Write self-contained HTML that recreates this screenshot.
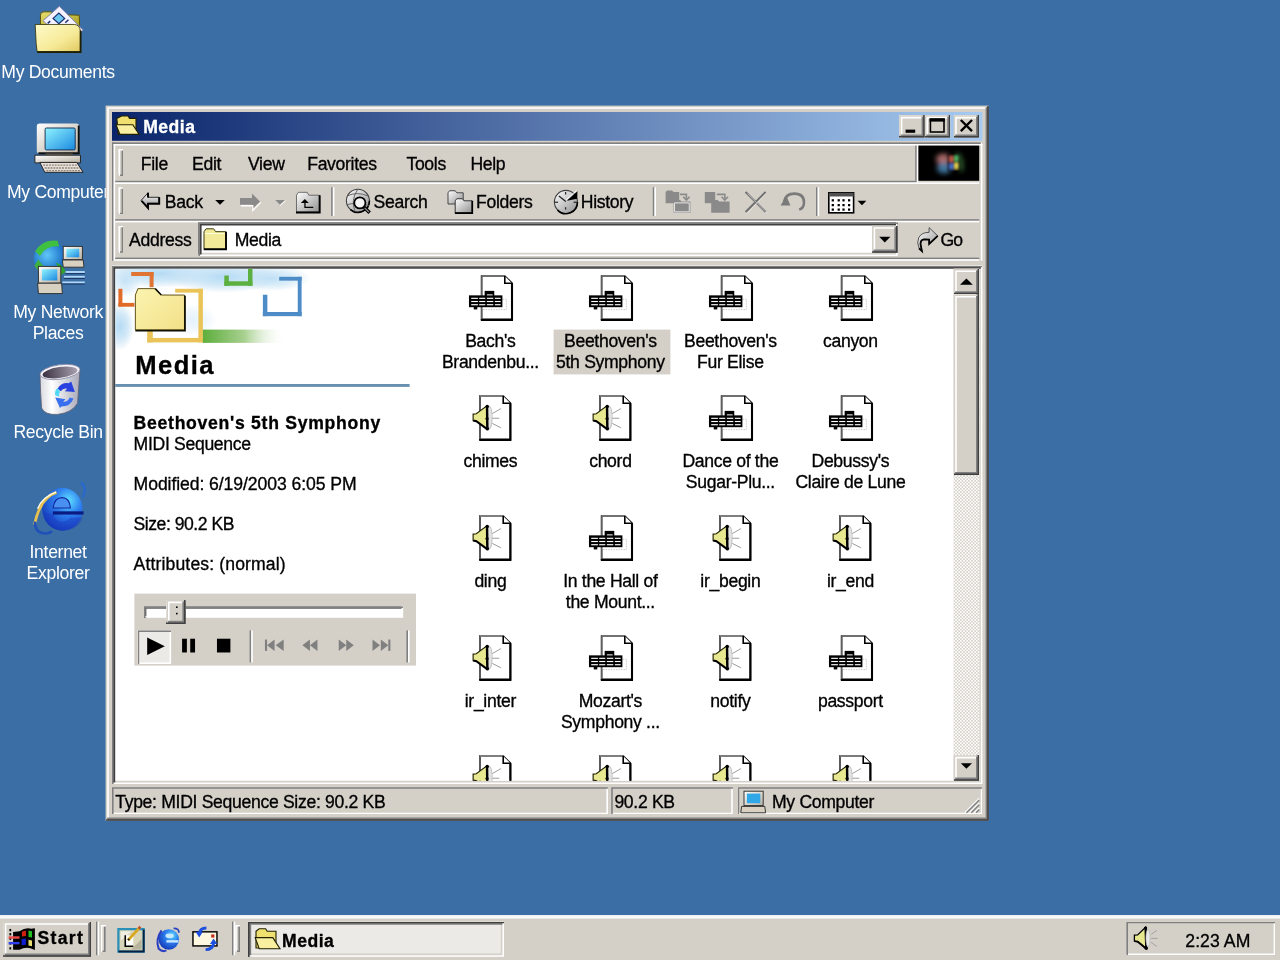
<!DOCTYPE html><html><head><meta charset="utf-8"><style>
html,body{margin:0;padding:0;width:1280px;height:960px;overflow:hidden;background:#3A6EA5;}
#root{position:absolute;left:0;top:0;width:800px;height:600px;transform:scale(1.6);will-change:transform;transform-origin:0 0;background:#3A6EA5;overflow:hidden;font-family:"Liberation Sans",sans-serif;font-size:11px;color:#000;}
.a{position:absolute;}
.t{position:absolute;white-space:nowrap;font-size:11px;line-height:13px;letter-spacing:-0.2px;-webkit-text-stroke:0.2px currentColor;}
.b{font-weight:bold;letter-spacing:0.3px;}
.face{background:#D4D0C8;}
.raised{background:#D4D0C8;box-shadow:inset -1px -1px #404040,inset 1px 1px #D4D0C8,inset -2px -2px #808080,inset 2px 2px #FFFFFF;}
.sunk{box-shadow:inset 1px 1px #808080,inset -1px -1px #FFFFFF,inset 2px 2px #404040,inset -2px -2px #D4D0C8;}
.panel{box-shadow:inset 1px 1px #808080,inset -1px -1px #FFFFFF;}
.grip{width:3px;background:#D4D0C8;box-shadow:inset 1px 1px #FFFFFF,inset -1px -1px #808080;}
.dlabel{position:absolute;width:75px;text-align:center;color:#fff;font-size:11px;line-height:13px;letter-spacing:-0.2px;}
.ilabel{position:absolute;width:75px;text-align:center;font-size:11px;line-height:13px;letter-spacing:-0.2px;-webkit-text-stroke:0.2px currentColor;}
svg{position:absolute;overflow:visible;}
</style></head><body><div id="root">

<svg style="left:0;top:0" width="800" height="600" viewBox="0 0 800 600"><defs>
<linearGradient id="dfold" x1="0" y1="0" x2="1" y2="1"><stop offset="0" stop-color="#FFFAC8"/><stop offset="0.6" stop-color="#F6EA98"/><stop offset="1" stop-color="#E0C860"/></linearGradient>
<linearGradient id="dfoldb" x1="0" y1="0" x2="1" y2="1"><stop offset="0" stop-color="#E8E070"/><stop offset="1" stop-color="#A8A020"/></linearGradient>
<linearGradient id="scr" x1="0" y1="0" x2="1" y2="1"><stop offset="0" stop-color="#90F4FF"/><stop offset="1" stop-color="#1A88E0"/></linearGradient>
<linearGradient id="beige" x1="0" y1="0" x2="1" y2="1"><stop offset="0" stop-color="#FFFFFF"/><stop offset="1" stop-color="#B8B0A0"/></linearGradient>
<linearGradient id="bin" x1="0" y1="0" x2="1" y2="0"><stop offset="0" stop-color="#D8D8E0"/><stop offset="0.3" stop-color="#FFFFFF"/><stop offset="1" stop-color="#A8A8B8"/></linearGradient>
<linearGradient id="bininside" x1="0" y1="0" x2="1" y2="0"><stop offset="0" stop-color="#3A3040"/><stop offset="1" stop-color="#A8A0B0"/></linearGradient>
<radialGradient id="globe" cx="0.4" cy="0.4" r="0.6"><stop offset="0" stop-color="#60C8F8"/><stop offset="1" stop-color="#1060C0"/></radialGradient>
<radialGradient id="iee" cx="0.65" cy="0.3" r="0.8"><stop offset="0" stop-color="#60E0FF"/><stop offset="0.4" stop-color="#2E80F0"/><stop offset="1" stop-color="#1030B0"/></radialGradient>
</defs>
<!-- My Documents -->
<path d="M25.3,15.5 L25.3,9.5 Q25.3,7.4 27.5,7.4 L32,7.4 L33.5,9 L49.5,9.5 L49.8,16 Z" fill="url(#dfoldb)" stroke="#5A5008" stroke-width="0.6"/>
<path d="M27,12.9 L37.1,3.9 L52,18.75 L42,28 Z" fill="#F4F2FF" stroke="#8080B0" stroke-width="0.6"/>
<path d="M33.2,11.5 L36.8,8.2 L40.4,11.5 L36.8,14.8 Z" fill="#68C8F0" stroke="#203070" stroke-width="0.8"/>
<path d="M29.8,14.6 L31.4,13.2 M40.8,14.2 L42.8,12.3" stroke="#203070" stroke-width="0.9"/>
<path d="M22,15.3 L46.5,15.3 Q50,15.5 50.2,19.5 L50.2,32.2 L23.2,32.2 L22.6,27 Z" fill="url(#dfold)" stroke="#303000" stroke-width="0.5"/>
<path d="M50.4,19 L50.4,32.6 L23.2,32.6" fill="none" stroke="#202000" stroke-width="1.1"/>
<!-- My Computer -->
<rect x="23" y="77.2" width="26.5" height="18.8" rx="1.8" fill="url(#beige)"/>
<path d="M49.2,78.5 L49.2,95.8 L24,95.8" fill="none" stroke="#101010" stroke-width="1.2"/>
<rect x="28.2" y="80" width="18.8" height="13.7" rx="0.8" fill="url(#scr)" stroke="#183050" stroke-width="0.6"/>
<path d="M28.4,96 L45.6,96 L45,99.1 L29,99.1 Z" fill="#6A6458"/>
<path d="M21.8,97 L50.3,97 L50.3,101.8 L21.8,101.8 Z" fill="url(#beige)" stroke="#202020" stroke-width="0.6"/>
<path d="M24.9,101.5 L48,101.5 L51.9,107.7 L28,107.7 Z" fill="#E8E0D8" stroke="#202020" stroke-width="0.6"/>
<path d="M27,103.2 L48.5,103.2 M28,105 L49.8,105 M29,106.6 L50.8,106.6" stroke="#8A8278" stroke-width="0.8" stroke-dasharray="1.2 0.6"/>
<!-- Network -->
<circle cx="31.5" cy="161.5" r="10.3" fill="url(#globe)"/>
<path d="M22,157 Q27,149 36,150.5 L37,154 Q29,153 25,160 Z" fill="#40C040"/>
<path d="M21.5,166 Q24,170 28,172 L30,168 Q26,166 24,162 Z" fill="#40B040"/>
<path d="M35,164 Q40,166 41,170 L38,172 Z" fill="#30A030"/>
<rect x="39.5" y="154" width="12" height="8.3" fill="url(#beige)" stroke="#303030" stroke-width="0.6"/>
<rect x="41.5" y="155.5" width="8" height="5.3" fill="url(#scr)"/>
<path d="M39,162.5 L52,162.5 L52.5,167 L39.5,167 Z" fill="#D8D0C0" stroke="#303030" stroke-width="0.6"/>
<g stroke="#B0D8F8" stroke-width="1.2"><path d="M41,170 L53,170"/><path d="M40,173 L53,173"/><path d="M39,176.5 L53,176.5"/></g>
<g stroke="#183060" stroke-width="0.6"><path d="M41,171 L53,171"/><path d="M40,174 L53,174"/><path d="M39,177.5 L53,177.5"/></g>
<rect x="24" y="166.5" width="14" height="10.5" fill="url(#beige)" stroke="#303030" stroke-width="0.6"/>
<rect x="26.2" y="168.3" width="9.6" height="7" fill="url(#scr)"/>
<path d="M23.5,177 L38.5,177 L39,183.5 L24,183.5 Z" fill="#D8D0C0" stroke="#303030" stroke-width="0.6"/>
<!-- Recycle bin -->
<path d="M25,234 Q25.3,246 26,255 Q28,259.5 36,259 Q45,258 48.5,252 L50,231 Z" fill="url(#bin)" stroke="#606070" stroke-width="0.5"/>
<ellipse cx="37.5" cy="232.5" rx="12.6" ry="4.5" transform="rotate(-8 37.5 232.5)" fill="#F4F4FA" stroke="#8888A0" stroke-width="0.5"/>
<ellipse cx="37.5" cy="232.8" rx="11" ry="3.4" transform="rotate(-8 37.5 232.8)" fill="url(#bininside)"/>
<path d="M36,243 Q38,239 43,239.5 L44.5,238.5 L46.8,245 L40.5,244.5 L42,243 Q39.5,242.3 38,244.5 Z" fill="#2A40E0"/>
<path d="M46,249 Q44,254 38.5,254 L37.5,255 L34.5,248.5 L41,249.5 L39.5,251 Q42.5,251.5 43.5,248.5 Z" fill="#3A70F0"/>
<path d="M34.5,247 Q34,244 36,242.5 L37.5,245 Q36.5,246 37,248 Z" fill="#50D8F8"/>
<!-- IE -->
<ellipse cx="39" cy="318.3" rx="12.6" ry="13.4" fill="url(#iee)"/>
<path d="M33.2,317.5 Q34,311 38.8,311 Q43.5,311 44,317.5 Z" fill="#4A90F0" stroke="#1028A0" stroke-width="0.7"/>
<path d="M33.5,321.5 Q34.5,326 39,326 Q42,326 44,323.5 L51.5,323.5 Q49,331.5 39.5,331.5 Q29,331 27.5,320 Z" fill="#1A3AC0" opacity="0.45"/>
<rect x="33" y="319.6" width="19.2" height="2" fill="#0A1A80"/>
<path d="M50.5,301.5 Q55,305 51.5,311" fill="none" stroke="#2868D0" stroke-width="1.3"/>
<path d="M35.3,307.8 Q25,311 21.6,327.9" fill="none" stroke="#E8C050" stroke-width="1.8"/>
<path d="M35,307.6 Q26.5,310.5 23.5,318" fill="none" stroke="#FFFFF0" stroke-width="0.8"/>
<path d="M22,326 Q21.5,333.5 29,333.4 Q31,333.2 32.5,332" fill="none" stroke="#2050B8" stroke-width="1.6"/>
</svg>
<div class="dlabel" style="left:-1.2px;top:39px;">My Documents</div>
<div class="dlabel" style="left:-1.2px;top:114px;">My Computer</div>
<div class="dlabel" style="left:-1.2px;top:189px;">My Network<br>Places</div>
<div class="dlabel" style="left:-1.2px;top:264px;">Recycle Bin</div>
<div class="dlabel" style="left:-1.2px;top:339px;">Internet<br>Explorer</div>
<div class="a raised" style="left:66px;top:66px;width:552px;height:447px;"></div>
<div class="a" style="left:70px;top:70px;width:544px;height:18px;background:linear-gradient(to right,#0A246A,#A6CAF0);"></div>
<div class="t b" style="left:89.5px;top:73px;color:#fff;">Media</div>
<div class="a raised" style="left:562px;top:72px;width:16px;height:14px;"></div>
<div class="a raised" style="left:578px;top:72px;width:16px;height:14px;"></div>
<div class="a raised" style="left:596px;top:72px;width:16px;height:14px;"></div>
<svg style="left:0;top:0" width="800" height="600" viewBox="0 0 800 600"><defs></defs>
<path d="M73,74 L76,72.5 L80,72.5 L81,74 L85,74 L85,84 L74,84 Z" fill="#F0E070" stroke="#202000" stroke-width="0.7"/>
<path d="M72.5,78 L83,78 L87,84 L75,84 Z" fill="#F8F0A0" stroke="#202000" stroke-width="0.7"/>
<rect x="566" y="81" width="6" height="2" fill="#000"/>
<rect x="581.5" y="74.5" width="8.5" height="8" fill="none" stroke="#000" stroke-width="1"/>
<rect x="581" y="74" width="9.5" height="2" fill="#000"/>
<path d="M600.5,75 L607.5,82 M607.5,75 L600.5,82" stroke="#000" stroke-width="1.5"/>
</svg>
<div class="a" style="left:70px;top:89px;width:1px;height:74px;background:#808080;"></div>
<div class="a" style="left:71px;top:90px;width:1px;height:73px;background:#FFFFFF;"></div>
<div class="a" style="left:70px;top:89px;width:544px;height:1px;background:#808080;"></div>
<div class="a" style="left:71px;top:90px;width:543px;height:1px;background:#FFFFFF;"></div>
<div class="a" style="left:72px;top:113px;width:501px;height:1px;background:#808080;"></div>
<div class="a" style="left:72px;top:114px;width:540px;height:1px;background:#FFFFFF;"></div>
<div class="a" style="left:72px;top:137px;width:540px;height:1px;background:#808080;"></div>
<div class="a" style="left:72px;top:138px;width:540px;height:1px;background:#FFFFFF;"></div>
<div class="a" style="left:72px;top:161px;width:540px;height:1px;background:#808080;"></div>
<div class="a" style="left:72px;top:162px;width:540px;height:1px;background:#FFFFFF;"></div>
<div class="a" style="left:572px;top:91px;width:1px;height:22px;background:#808080;"></div>
<div class="a" style="left:573px;top:91px;width:1px;height:23px;background:#FFFFFF;"></div>
<div class="a" style="left:613px;top:89px;width:1px;height:74px;background:#FFFFFF;"></div>
<div class="a grip" style="left:74px;top:93px;width:3px;height:17px;"></div>
<div class="a grip" style="left:74px;top:117px;width:3px;height:17px;"></div>
<div class="a grip" style="left:74px;top:141px;width:3px;height:17px;"></div>
<div class="t" style="left:88px;top:96px;">File</div>
<div class="t" style="left:120px;top:96px;">Edit</div>
<div class="t" style="left:155px;top:96px;">View</div>
<div class="t" style="left:192px;top:96px;">Favorites</div>
<div class="t" style="left:254px;top:96px;">Tools</div>
<div class="t" style="left:294px;top:96px;">Help</div>
<div class="a" style="left:574px;top:91px;width:38px;height:22px;background:#000;"></div>
<svg style="left:0;top:0" width="800" height="600" viewBox="0 0 800 600"><defs><filter id="blur1" x="-50%" y="-50%" width="200%" height="200%"><feGaussianBlur stdDeviation="1.6"/></filter><filter id="blur2" x="-50%" y="-50%" width="200%" height="200%"><feGaussianBlur stdDeviation="0.5"/></filter></defs>
<g filter="url(#blur1)">
<ellipse cx="589.5" cy="99.5" rx="4.5" ry="3.5" fill="#D08080" opacity="0.8"/>
<ellipse cx="590" cy="105" rx="4.5" ry="3.5" fill="#5090C0" opacity="0.8"/>
<path d="M598,96 Q602,100 600.5,107" stroke="#50A050" stroke-width="2" fill="none" opacity="0.8"/>
</g>
<g filter="url(#blur2)">
<rect x="592.5" y="96.5" width="7" height="10.5" fill="#101010"/>
<rect x="593.3" y="97.6" width="2.6" height="3.8" fill="#C05848"/>
<rect x="596.4" y="97.2" width="2.6" height="3.8" fill="#50B060"/>
<rect x="593.3" y="102.1" width="2.6" height="3.8" fill="#4870C8"/>
<rect x="596.4" y="101.7" width="2.6" height="3.8" fill="#E0D050"/>
</g>
</svg>
<div class="t" style="left:103px;top:120px;">Back</div>
<div class="t" style="left:233.5px;top:120px;">Search</div>
<div class="t" style="left:297.5px;top:120px;">Folders</div>
<div class="t" style="left:363px;top:120px;">History</div>
<div class="a" style="left:207px;top:117px;width:1px;height:18px;background:#808080;"></div>
<div class="a" style="left:208px;top:117px;width:1px;height:18px;background:#FFFFFF;"></div>
<div class="a" style="left:408px;top:117px;width:1px;height:18px;background:#808080;"></div>
<div class="a" style="left:409px;top:117px;width:1px;height:18px;background:#FFFFFF;"></div>
<div class="a" style="left:510px;top:117px;width:1px;height:18px;background:#808080;"></div>
<div class="a" style="left:511px;top:117px;width:1px;height:18px;background:#FFFFFF;"></div>
<svg style="left:0;top:0" width="800" height="600" viewBox="0 0 800 600"><defs>
<linearGradient id="arrw" x1="0" y1="0" x2="0" y2="1"><stop offset="0" stop-color="#FFFFFF"/><stop offset="1" stop-color="#909090"/></linearGradient>
<linearGradient id="metal" x1="0" y1="0" x2="1" y2="1"><stop offset="0" stop-color="#FFFFFF"/><stop offset="1" stop-color="#909090"/></linearGradient>
</defs>
<!-- back -->
<g transform="translate(0,-0.7)"><path d="M88.2,126 L92.5,121.2 L92.5,124 L99.5,124 L99.5,127.8 L92.5,127.8 L92.5,130.7 Z" fill="url(#arrw)" stroke="#000" stroke-width="0.5"/>
<path d="M92.5,121.2 L92.5,124.2 M99.5,124 L99.5,128 L92.5,128 L92.5,130.7 L88.5,126.3" fill="none" stroke="#000" stroke-width="1.2"/></g>
<path d="M134.5,125 L140.5,125 L137.5,128 Z" fill="#000"/>
<!-- forward (disabled) -->
<path d="M162.5,126 L157.5,121 L157.5,123.8 L150,123.8 L150,128 L157.5,128 L157.5,131 Z" fill="#8A8A8A"/>
<path d="M150.5,128.6 L158,128.6 L158,131.5 L163,126.5" fill="none" stroke="#FFFFFF" stroke-width="0.8"/>
<path d="M172,125 L178,125 L175,128 Z" fill="#8A8A8A"/>
<path d="M175,128.5 L178.5,125.5" stroke="#fff" stroke-width="0.6"/>
<!-- up folder -->
<path d="M185.3,132.5 L185.3,122 L186.5,120.2 L192,120.2 L193,122 L199.6,122 L199.6,132.5 Z" fill="url(#metal)" stroke="#505050" stroke-width="0.5"/>
<path d="M199.8,122 L199.8,132.8 L185,132.8" fill="none" stroke="#000" stroke-width="1.2"/>
<path d="M190.5,124.3 L188,126.8 L193,126.8 Z" fill="#000"/>
<path d="M190.6,126.5 L190.6,129.6 L195.8,129.6" fill="none" stroke="#000" stroke-width="0.8"/>
<!-- search -->
<circle cx="223.7" cy="125.5" r="7.2" fill="url(#metal)" stroke="#404040" stroke-width="0.7"/>
<path d="M230.9,125.5 A7.2,7.2 0 0 1 219,131" fill="none" stroke="#000" stroke-width="1"/>
<path d="M217,122.5 Q223,119.5 230,122.5 M216.6,128 Q223,126 230.5,128.5 M223.5,118.5 Q219,125 222,132.5" stroke="#606060" stroke-width="0.6" fill="none"/>
<circle cx="224.9" cy="126.8" r="3.5" fill="#F4F4F4" stroke="#000" stroke-width="1.1"/>
<path d="M227.6,129.6 L231,133" stroke="#000" stroke-width="2.2"/>
<path d="M227.9,129.9 L230.5,132.5" stroke="#909090" stroke-width="0.8"/>
<!-- folders -->
<path d="M280,127.5 L280,120.5 L281,119.2 L284.5,119.2 L285.5,120.5 L289.5,120.5 L289.5,127.5 Z" fill="url(#metal)" stroke="#404040" stroke-width="0.6"/>
<path d="M284.5,133 L284.5,125.5 L285.5,124.2 L289,124.2 L290,125.5 L295,125.5 L295,133 Z" fill="url(#metal)" stroke="#303030" stroke-width="0.6"/>
<path d="M295.2,125.5 L295.2,133.2 L284.3,133.2" fill="none" stroke="#000" stroke-width="1"/>
<!-- history -->
<circle cx="353.7" cy="126.2" r="7.2" fill="url(#metal)" stroke="#404040" stroke-width="0.7"/>
<path d="M360.9,126.2 A7.2,7.2 0 0 1 348.5,131.3" fill="none" stroke="#000" stroke-width="1"/>
<g stroke="#303030" stroke-width="0.8"><path d="M353.5,120 L353.5,121.6"/><path d="M353.5,129.5 L353.5,131"/><path d="M346.5,126.4 L348.8,126.4"/><path d="M358.5,126.4 L360.5,126.4"/></g>
<path d="M353.6,126 L349.3,122.5" stroke="#202020" stroke-width="0.8"/>
<path d="M354.2,125.4 L360.9,119.6 L360.8,124.2 Z" fill="#000"/>
<path d="M353.8,124.8 L360.3,119.2" stroke="#FFFFFF" stroke-width="0.6"/>
<!-- move to -->
<g fill="#8A8A8A">
<path d="M416,127 L416,120 L417,119 L420,119 L421,120 L424.5,120 L424.5,127 Z"/>
<path d="M421,133 L421,126 L422,125 L425,125 L426,126 L431.5,126 L431.5,133 Z"/>
</g>
<path d="M421.6,126.8 L421.6,132.4 L430.8,132.4 L430.8,126.8 Z" fill="none" stroke="#fff" stroke-width="0.5"/>
<path d="M425,121.5 L429,121.5 L429,124 M427,123 L429,125 L431,123" fill="none" stroke="#8A8A8A" stroke-width="1"/>
<!-- copy to -->
<g fill="#8A8A8A">
<path d="M440.5,127 L440.5,120 L447,120 L447,127 Z"/>
<path d="M444.5,133 L444.5,126 L445.5,125 L448.5,125 L449.5,126 L456,126 L456,133 Z"/>
</g>
<path d="M448,121.5 L453,121.5 L453,124 M451,123 L453,125 L455,123" fill="none" stroke="#8A8A8A" stroke-width="1"/>
<!-- delete -->
<path d="M466,120 L478.5,132.5 M478.5,120 L466,132.5" stroke="#707070" stroke-width="1.3"/>
<path d="M466.5,120.3 L478.8,132.8 M478.2,120.2 L466.2,133" stroke="#fff" stroke-width="0.3" transform="translate(0.6,0.6)"/>
<!-- undo -->
<path d="M490,126 Q491,121 496.5,121 Q502.5,121 502.5,126.5 Q502.5,130 499.5,131" fill="none" stroke="#7A7A7A" stroke-width="1.6"/>
<path d="M487.8,128.5 L491.5,122.5 L494,128.5 Z" fill="#7A7A7A"/>
<!-- views -->
<rect x="518" y="120.5" width="15.5" height="12.5" fill="#fff" stroke="#000" stroke-width="1"/>
<rect x="518" y="120.5" width="15.5" height="2.3" fill="#505050"/>
<g fill="#000">
<rect x="519.8" y="124.5" width="1.4" height="1.4"/><rect x="523.5" y="124.5" width="1.4" height="1.4"/><rect x="526.5" y="124.5" width="1.4" height="1.4"/><rect x="530" y="124.5" width="1.4" height="1.4"/>
<rect x="519.8" y="127.5" width="1.4" height="1.4"/><rect x="523.5" y="127.5" width="1.4" height="1.4"/><rect x="526.5" y="127.5" width="1.4" height="1.4"/><rect x="530" y="127.5" width="1.4" height="1.4"/>
<rect x="519.8" y="130.3" width="1.4" height="1.4"/><rect x="523.5" y="130.3" width="1.4" height="1.4"/><rect x="526.5" y="130.3" width="1.4" height="1.4"/><rect x="530" y="130.3" width="1.4" height="1.4"/>
</g>
<path d="M536,125.5 L541.5,125.5 L538.7,128.3 Z" fill="#000"/>
</svg>
<div class="t" style="left:80.7px;top:144.45px;">Address</div>
<div class="a sunk" style="left:124px;top:139px;width:437px;height:21px;background:#fff;"></div>
<div class="t" style="left:146.7px;top:144.45px;">Media</div>
<div class="a raised" style="left:545px;top:141px;width:16px;height:17px;"></div>
<div class="t" style="left:587.8px;top:143.9px;letter-spacing:-0.6px;">Go</div>
<svg style="left:0;top:0" width="800" height="600" viewBox="0 0 800 600"><defs><linearGradient id="arrw2" x1="0" y1="0" x2="1" y2="1"><stop offset="0" stop-color="#FFFFFF"/><stop offset="1" stop-color="#909090"/></linearGradient></defs>
<path d="M127.5,155.5 L127.5,144.8 L128.8,143 L133.5,143 L134.8,144.8 L141,144.8 L141,155.5 Z" fill="#F2EA98" stroke="#303000" stroke-width="0.6"/>
<path d="M128,146 L140.5,146" stroke="#FFFFE0" stroke-width="0.6"/>
<path d="M141.3,144.8 L141.3,155.8 L127.3,155.8" fill="none" stroke="#000" stroke-width="1.1"/>
<path d="M549.5,148 L556.5,148 L553,151.5 Z" fill="#000"/>
<!-- go arrow -->
<path d="M586.1,147.4 L580.7,142.3 L580.7,145.2 Q576,145.2 574.2,148.5 Q572.8,151.8 574.4,155 L576.2,156.9 L575.3,152.5 Q575.3,149.8 577.6,149.6 L580.7,149.7 L580.7,152.5 Z" fill="url(#arrw2)" stroke="#303030" stroke-width="0.5"/>
<path d="M586.1,147.4 L580.7,152.5 L580.7,149.7 L577.6,149.6 Q575.3,149.8 575.3,152.5 L576.2,156.9 L574.3,155.2" fill="none" stroke="#000" stroke-width="1.1"/>
</svg>
<div class="a sunk" style="left:70px;top:166px;width:544px;height:324px;background:#fff;"></div>
<svg style="left:0;top:0" width="800" height="600" viewBox="0 0 800 600">
<defs>
<radialGradient id="cloud1" cx="0.5" cy="0.5" r="0.5"><stop offset="0" stop-color="#B4DAF4"/><stop offset="0.5" stop-color="#C4E2F6" stop-opacity="0.8"/><stop offset="1" stop-color="#BFDDF2" stop-opacity="0"/></radialGradient>
<linearGradient id="gbar" x1="0" x2="1" y1="0" y2="0"><stop offset="0" stop-color="#5DAE3C"/><stop offset="0.5" stop-color="#A8D090"/><stop offset="1" stop-color="#FFFFFF" stop-opacity="0"/></linearGradient>
<linearGradient id="fold" x1="0" x2="1" y1="0" y2="1"><stop offset="0" stop-color="#FBF4B0"/><stop offset="1" stop-color="#F2E088"/></linearGradient>
<clipPath id="clipc"><rect x="72" y="168" width="524" height="320"/></clipPath>
</defs>
<g clip-path="url(#clipc)">
<ellipse cx="100" cy="171" rx="34" ry="9" fill="url(#cloud1)"/>
<ellipse cx="140" cy="173" rx="36" ry="10" fill="url(#cloud1)"/>
<ellipse cx="170" cy="174" rx="24" ry="8" fill="url(#cloud1)" opacity="0.8"/>
<ellipse cx="78" cy="176" rx="10" ry="10" fill="url(#cloud1)" opacity="0.7"/>
<ellipse cx="75" cy="204" rx="9" ry="15" fill="url(#cloud1)"/>
<ellipse cx="120" cy="200" rx="16" ry="10" fill="url(#cloud1)" opacity="0.35"/>
<!-- orange bracket -->
<rect x="82" y="170" width="14" height="2.5" fill="#E07434"/>
<rect x="93.5" y="170" width="2.5" height="9.5" fill="#E07434"/>
<rect x="74" y="180.5" width="2.5" height="11" fill="#E06A28"/>
<rect x="74" y="189.3" width="10" height="2.4" fill="#E06A28"/>
<!-- yellow bracket -->
<rect x="109.5" y="180.5" width="17.3" height="2.4" fill="#EAC458"/>
<rect x="124" y="180.5" width="2.8" height="33.5" fill="#EAC458"/>
<rect x="92" y="211.2" width="34.8" height="2.8" fill="#EAC458"/>
<rect x="92" y="206" width="3.5" height="8" fill="#EAC458"/>
<!-- green bar -->
<rect x="126.8" y="206" width="52" height="8.3" fill="url(#gbar)"/>
<!-- green bracket -->
<rect x="155" y="166" width="2.8" height="12.6" fill="#5CB040"/>
<rect x="140.2" y="175.8" width="17.6" height="2.8" fill="#5CB040"/>
<rect x="140.2" y="172.2" width="2.8" height="6.4" fill="#5CB040"/>
<!-- blue bracket -->
<rect x="174.5" y="173" width="14" height="2.4" fill="#4E8CC8"/>
<rect x="186.1" y="173" width="2.4" height="24.6" fill="#4E8CC8"/>
<rect x="164.3" y="195" width="24.2" height="2.6" fill="#4E8CC8"/>
<rect x="164.3" y="184.2" width="2.8" height="13.4" fill="#4E8CC8"/>
<!-- folder -->
<path d="M84.6,206.2 L84.6,184.4 L86.2,180.4 L97,180.4 L100.8,184.4 L115.3,184.4 L115.3,206.2 Z" fill="url(#fold)" stroke="#5A4A10" stroke-width="0.6"/>
<path d="M115.6,184.8 L115.6,206.6 L84.6,206.6" fill="none" stroke="#101000" stroke-width="1.1"/>
<path d="M97,180.4 L100.8,184.4" fill="none" stroke="#101000" stroke-width="1"/>
</g>
<rect x="72" y="240" width="184" height="1.8" fill="#6890B0"/>
</svg>
<div class="t" style="left:84.5px;top:219.8px;font-size:16px;line-height:18px;font-weight:bold;letter-spacing:0.9px;">Media</div>
<div class="t b" style="left:83.5px;top:258.15px;letter-spacing:0.45px;">Beethoven's 5th Symphony</div>
<div class="t" style="left:83.5px;top:271.35px;">MIDI Sequence</div>
<div class="t" style="left:83.5px;top:296.45px;letter-spacing:-0.05px;">Modified: 6/19/2003 6:05 PM</div>
<div class="t" style="left:83.5px;top:321.25px;letter-spacing:-0.3px;">Size: 90.2 KB</div>
<div class="t" style="left:83.5px;top:345.95px;letter-spacing:0.08px;">Attributes: (normal)</div>
<div class="a" style="left:84px;top:371px;width:176px;height:45px;background:#D4D0C8;"></div>
<div class="a" style="left:90px;top:378.5px;width:162px;height:7px;background:#fff;box-shadow:inset 1px 1px #808080,inset -1px -1px #FFFFFF,inset 1.5px 1.5px #606060;"></div>
<div class="a raised" style="left:104px;top:374.5px;width:12px;height:15px;"></div>
<div class="a" style="left:109.5px;top:379px;width:1px;height:1px;background:#000;"></div>
<div class="a" style="left:109.5px;top:383px;width:1px;height:1px;background:#000;"></div>
<div class="a" style="left:85.5px;top:394px;width:21px;height:21px;background:#ECEAE6;box-shadow:inset 1px 1px #808080,inset -1px -1px #FFFFFF;"></div>
<div class="a" style="left:156px;top:394px;width:1px;height:20px;background:#808080;"></div>
<div class="a" style="left:157px;top:394px;width:1px;height:20px;background:#FFFFFF;"></div>
<div class="a" style="left:254px;top:394px;width:1px;height:20px;background:#808080;"></div>
<div class="a" style="left:255px;top:394px;width:1px;height:20px;background:#FFFFFF;"></div>
<svg style="left:0;top:0" width="800" height="600" viewBox="0 0 800 600">
<path d="M92,398.4 L103,403.9 L92,409.4 Z" fill="#000"/>
<rect x="113.8" y="399.2" width="3" height="8.6" fill="#000"/>
<rect x="118.9" y="399.2" width="3" height="8.6" fill="#000"/>
<rect x="135.6" y="399.2" width="8.4" height="8.6" fill="#000"/>
<g fill="#808080" transform="translate(0,1.3)">
<rect x="165.6" y="398.4" width="1.3" height="7.1"/>
<path d="M166.9,402 L171.6,398.4 L171.6,405.5 Z"/><path d="M172.3,402 L177.3,398.4 L177.3,405.5 Z"/>
<path d="M189,402 L193.7,398.4 L193.7,405.5 Z"/><path d="M193.7,402 L198.4,398.4 L198.4,405.5 Z"/>
<path d="M211.7,398.4 L216.4,402 L211.7,405.5 Z"/><path d="M216.4,398.4 L221.1,402 L216.4,405.5 Z"/>
<path d="M232.8,398.4 L237.5,402 L232.8,405.5 Z"/><path d="M238,398.4 L242.7,402 L238,405.5 Z"/>
<rect x="242.7" y="398.4" width="1.3" height="7.1"/>
</g>
</svg>
<div class="a" style="left:346px;top:206px;width:73px;height:28px;background:#D4D0C8;"></div>
<div class="ilabel" style="left:269.0px;top:206.7px;">Bach's<br>Brandenbu...</div>
<div class="ilabel" style="left:344.0px;top:206.7px;">Beethoven's<br>5th Symphony</div>
<div class="ilabel" style="left:419.0px;top:206.7px;">Beethoven's<br>Fur Elise</div>
<div class="ilabel" style="left:494.0px;top:206.7px;">canyon</div>
<div class="ilabel" style="left:269.0px;top:281.7px;">chimes</div>
<div class="ilabel" style="left:344.0px;top:281.7px;">chord</div>
<div class="ilabel" style="left:419.0px;top:281.7px;">Dance of the<br>Sugar-Plu...</div>
<div class="ilabel" style="left:494.0px;top:281.7px;">Debussy's<br>Claire de Lune</div>
<div class="ilabel" style="left:269.0px;top:356.7px;">ding</div>
<div class="ilabel" style="left:344.0px;top:356.7px;">In the Hall of<br>the Mount...</div>
<div class="ilabel" style="left:419.0px;top:356.7px;">ir_begin</div>
<div class="ilabel" style="left:494.0px;top:356.7px;">ir_end</div>
<div class="ilabel" style="left:269.0px;top:431.7px;">ir_inter</div>
<div class="ilabel" style="left:344.0px;top:431.7px;">Mozart's<br>Symphony ...</div>
<div class="ilabel" style="left:419.0px;top:431.7px;">notify</div>
<div class="ilabel" style="left:494.0px;top:431.7px;">passport</div>
<svg style="left:0;top:0" width="800" height="600" viewBox="0 0 800 600"><defs><clipPath id="clipg"><rect x="72" y="168" width="524" height="320"/></clipPath></defs><g clip-path="url(#clipg)">
<g transform="translate(290.5,170)">
<path d="M10.5,2.5 L25,2.5 L29.5,7 L29.5,29.5 L10.5,29.5 Z" fill="#fff" stroke="#000" stroke-width="1"/>
<path d="M10.5,2.5 L25,2.5" stroke="#808080" stroke-width="1"/>
<path d="M10.5,2.5 L10.5,29.5" stroke="#606060" stroke-width="0.8"/>
<path d="M25,2.5 L25,7 L29.5,7" fill="#fff" stroke="#000" stroke-width="1"/>
<path d="M29.5,7 L29.5,30 L10,30" fill="none" stroke="#000" stroke-width="1.3"/>
<rect x="11" y="17" width="15" height="6.5" fill="none" stroke="#C0C0C0" stroke-width="0.6" stroke-dasharray="0.8 0.8"/>
<rect x="2.6" y="14.6" width="20.9" height="7.4" fill="#000"/>
<rect x="12.4" y="11.8" width="6" height="3.2" fill="#000"/>
<rect x="5.6" y="21.4" width="2.2" height="2" fill="#000"/>
<g fill="#fff"><rect x="4" y="16.1" width="4.2" height="0.7"/><rect x="9" y="16.1" width="3.8" height="0.7"/><rect x="13.8" y="16.1" width="4" height="0.7"/><rect x="18.8" y="16.1" width="3.6" height="0.7"/>
<rect x="4" y="18.1" width="4.2" height="0.7"/><rect x="9" y="18.1" width="3.8" height="0.7"/><rect x="13.8" y="18.1" width="4" height="0.7"/><rect x="18.8" y="18.1" width="3.6" height="0.7"/>
<rect x="4" y="20.1" width="4.2" height="0.7"/><rect x="9" y="20.1" width="3.8" height="0.7"/><rect x="13.8" y="20.1" width="4" height="0.7"/><rect x="18.8" y="20.1" width="3.6" height="0.7"/>
<rect x="13.8" y="14" width="3.6" height="0.6"/></g>
</g>
<g transform="translate(365.5,170)">
<path d="M10.5,2.5 L25,2.5 L29.5,7 L29.5,29.5 L10.5,29.5 Z" fill="#fff" stroke="#000" stroke-width="1"/>
<path d="M10.5,2.5 L25,2.5" stroke="#808080" stroke-width="1"/>
<path d="M10.5,2.5 L10.5,29.5" stroke="#606060" stroke-width="0.8"/>
<path d="M25,2.5 L25,7 L29.5,7" fill="#fff" stroke="#000" stroke-width="1"/>
<path d="M29.5,7 L29.5,30 L10,30" fill="none" stroke="#000" stroke-width="1.3"/>
<rect x="11" y="17" width="15" height="6.5" fill="none" stroke="#C0C0C0" stroke-width="0.6" stroke-dasharray="0.8 0.8"/>
<rect x="2.6" y="14.6" width="20.9" height="7.4" fill="#000"/>
<rect x="12.4" y="11.8" width="6" height="3.2" fill="#000"/>
<rect x="5.6" y="21.4" width="2.2" height="2" fill="#000"/>
<g fill="#fff"><rect x="4" y="16.1" width="4.2" height="0.7"/><rect x="9" y="16.1" width="3.8" height="0.7"/><rect x="13.8" y="16.1" width="4" height="0.7"/><rect x="18.8" y="16.1" width="3.6" height="0.7"/>
<rect x="4" y="18.1" width="4.2" height="0.7"/><rect x="9" y="18.1" width="3.8" height="0.7"/><rect x="13.8" y="18.1" width="4" height="0.7"/><rect x="18.8" y="18.1" width="3.6" height="0.7"/>
<rect x="4" y="20.1" width="4.2" height="0.7"/><rect x="9" y="20.1" width="3.8" height="0.7"/><rect x="13.8" y="20.1" width="4" height="0.7"/><rect x="18.8" y="20.1" width="3.6" height="0.7"/>
<rect x="13.8" y="14" width="3.6" height="0.6"/></g>
</g>
<g transform="translate(440.5,170)">
<path d="M10.5,2.5 L25,2.5 L29.5,7 L29.5,29.5 L10.5,29.5 Z" fill="#fff" stroke="#000" stroke-width="1"/>
<path d="M10.5,2.5 L25,2.5" stroke="#808080" stroke-width="1"/>
<path d="M10.5,2.5 L10.5,29.5" stroke="#606060" stroke-width="0.8"/>
<path d="M25,2.5 L25,7 L29.5,7" fill="#fff" stroke="#000" stroke-width="1"/>
<path d="M29.5,7 L29.5,30 L10,30" fill="none" stroke="#000" stroke-width="1.3"/>
<rect x="11" y="17" width="15" height="6.5" fill="none" stroke="#C0C0C0" stroke-width="0.6" stroke-dasharray="0.8 0.8"/>
<rect x="2.6" y="14.6" width="20.9" height="7.4" fill="#000"/>
<rect x="12.4" y="11.8" width="6" height="3.2" fill="#000"/>
<rect x="5.6" y="21.4" width="2.2" height="2" fill="#000"/>
<g fill="#fff"><rect x="4" y="16.1" width="4.2" height="0.7"/><rect x="9" y="16.1" width="3.8" height="0.7"/><rect x="13.8" y="16.1" width="4" height="0.7"/><rect x="18.8" y="16.1" width="3.6" height="0.7"/>
<rect x="4" y="18.1" width="4.2" height="0.7"/><rect x="9" y="18.1" width="3.8" height="0.7"/><rect x="13.8" y="18.1" width="4" height="0.7"/><rect x="18.8" y="18.1" width="3.6" height="0.7"/>
<rect x="4" y="20.1" width="4.2" height="0.7"/><rect x="9" y="20.1" width="3.8" height="0.7"/><rect x="13.8" y="20.1" width="4" height="0.7"/><rect x="18.8" y="20.1" width="3.6" height="0.7"/>
<rect x="13.8" y="14" width="3.6" height="0.6"/></g>
</g>
<g transform="translate(515.5,170)">
<path d="M10.5,2.5 L25,2.5 L29.5,7 L29.5,29.5 L10.5,29.5 Z" fill="#fff" stroke="#000" stroke-width="1"/>
<path d="M10.5,2.5 L25,2.5" stroke="#808080" stroke-width="1"/>
<path d="M10.5,2.5 L10.5,29.5" stroke="#606060" stroke-width="0.8"/>
<path d="M25,2.5 L25,7 L29.5,7" fill="#fff" stroke="#000" stroke-width="1"/>
<path d="M29.5,7 L29.5,30 L10,30" fill="none" stroke="#000" stroke-width="1.3"/>
<rect x="11" y="17" width="15" height="6.5" fill="none" stroke="#C0C0C0" stroke-width="0.6" stroke-dasharray="0.8 0.8"/>
<rect x="2.6" y="14.6" width="20.9" height="7.4" fill="#000"/>
<rect x="12.4" y="11.8" width="6" height="3.2" fill="#000"/>
<rect x="5.6" y="21.4" width="2.2" height="2" fill="#000"/>
<g fill="#fff"><rect x="4" y="16.1" width="4.2" height="0.7"/><rect x="9" y="16.1" width="3.8" height="0.7"/><rect x="13.8" y="16.1" width="4" height="0.7"/><rect x="18.8" y="16.1" width="3.6" height="0.7"/>
<rect x="4" y="18.1" width="4.2" height="0.7"/><rect x="9" y="18.1" width="3.8" height="0.7"/><rect x="13.8" y="18.1" width="4" height="0.7"/><rect x="18.8" y="18.1" width="3.6" height="0.7"/>
<rect x="4" y="20.1" width="4.2" height="0.7"/><rect x="9" y="20.1" width="3.8" height="0.7"/><rect x="13.8" y="20.1" width="4" height="0.7"/><rect x="18.8" y="20.1" width="3.6" height="0.7"/>
<rect x="13.8" y="14" width="3.6" height="0.6"/></g>
</g>
<g transform="translate(290.5,245)">
<path d="M9.5,2.5 L24,2.5 L28.5,7 L28.5,29.5 L9.5,29.5 Z" fill="#fff" stroke="#000" stroke-width="1"/>
<path d="M9.5,2.5 L24,2.5" stroke="#909090" stroke-width="1"/>
<path d="M9.5,2.5 L9.5,29.5" stroke="#707070" stroke-width="0.8"/>
<path d="M24,2.5 L24,7 L28.5,7" fill="#fff" stroke="#000" stroke-width="1"/>
<path d="M28.5,7 L28.5,30 L9,30" fill="none" stroke="#000" stroke-width="1.3"/>
<ellipse cx="15.3" cy="16" rx="1.8" ry="7.2" fill="#E4E4E4" stroke="#B8B8B8" stroke-width="0.5"/>
<path d="M5.2,13.8 L7.2,13.6 L13.8,8.6 L14.2,23.4 L7.2,18.2 L5.2,18 Z" fill="#E8E890" stroke="#202000" stroke-width="0.7"/>
<path d="M5.4,17.8 L7.2,18.2 L14.2,23.4" fill="none" stroke="#000" stroke-width="1.3"/>
<path d="M13.9,8.8 L14.1,23.2" stroke="#000" stroke-width="1.5"/>
<circle cx="14" cy="9" r="1.1" fill="#000"/><circle cx="14.1" cy="23" r="1.1" fill="#000"/>
<circle cx="13.9" cy="16.6" r="1" fill="#000"/>
<g stroke="#9A9A9A" stroke-width="0.6"><path d="M17.2,13.5 L22.6,10.4"/><path d="M17.2,16.4 L21.6,16.4"/><path d="M17.2,19.6 L22.6,22.4"/></g>
</g>
<g transform="translate(365.5,245)">
<path d="M9.5,2.5 L24,2.5 L28.5,7 L28.5,29.5 L9.5,29.5 Z" fill="#fff" stroke="#000" stroke-width="1"/>
<path d="M9.5,2.5 L24,2.5" stroke="#909090" stroke-width="1"/>
<path d="M9.5,2.5 L9.5,29.5" stroke="#707070" stroke-width="0.8"/>
<path d="M24,2.5 L24,7 L28.5,7" fill="#fff" stroke="#000" stroke-width="1"/>
<path d="M28.5,7 L28.5,30 L9,30" fill="none" stroke="#000" stroke-width="1.3"/>
<ellipse cx="15.3" cy="16" rx="1.8" ry="7.2" fill="#E4E4E4" stroke="#B8B8B8" stroke-width="0.5"/>
<path d="M5.2,13.8 L7.2,13.6 L13.8,8.6 L14.2,23.4 L7.2,18.2 L5.2,18 Z" fill="#E8E890" stroke="#202000" stroke-width="0.7"/>
<path d="M5.4,17.8 L7.2,18.2 L14.2,23.4" fill="none" stroke="#000" stroke-width="1.3"/>
<path d="M13.9,8.8 L14.1,23.2" stroke="#000" stroke-width="1.5"/>
<circle cx="14" cy="9" r="1.1" fill="#000"/><circle cx="14.1" cy="23" r="1.1" fill="#000"/>
<circle cx="13.9" cy="16.6" r="1" fill="#000"/>
<g stroke="#9A9A9A" stroke-width="0.6"><path d="M17.2,13.5 L22.6,10.4"/><path d="M17.2,16.4 L21.6,16.4"/><path d="M17.2,19.6 L22.6,22.4"/></g>
</g>
<g transform="translate(440.5,245)">
<path d="M10.5,2.5 L25,2.5 L29.5,7 L29.5,29.5 L10.5,29.5 Z" fill="#fff" stroke="#000" stroke-width="1"/>
<path d="M10.5,2.5 L25,2.5" stroke="#808080" stroke-width="1"/>
<path d="M10.5,2.5 L10.5,29.5" stroke="#606060" stroke-width="0.8"/>
<path d="M25,2.5 L25,7 L29.5,7" fill="#fff" stroke="#000" stroke-width="1"/>
<path d="M29.5,7 L29.5,30 L10,30" fill="none" stroke="#000" stroke-width="1.3"/>
<rect x="11" y="17" width="15" height="6.5" fill="none" stroke="#C0C0C0" stroke-width="0.6" stroke-dasharray="0.8 0.8"/>
<rect x="2.6" y="14.6" width="20.9" height="7.4" fill="#000"/>
<rect x="12.4" y="11.8" width="6" height="3.2" fill="#000"/>
<rect x="5.6" y="21.4" width="2.2" height="2" fill="#000"/>
<g fill="#fff"><rect x="4" y="16.1" width="4.2" height="0.7"/><rect x="9" y="16.1" width="3.8" height="0.7"/><rect x="13.8" y="16.1" width="4" height="0.7"/><rect x="18.8" y="16.1" width="3.6" height="0.7"/>
<rect x="4" y="18.1" width="4.2" height="0.7"/><rect x="9" y="18.1" width="3.8" height="0.7"/><rect x="13.8" y="18.1" width="4" height="0.7"/><rect x="18.8" y="18.1" width="3.6" height="0.7"/>
<rect x="4" y="20.1" width="4.2" height="0.7"/><rect x="9" y="20.1" width="3.8" height="0.7"/><rect x="13.8" y="20.1" width="4" height="0.7"/><rect x="18.8" y="20.1" width="3.6" height="0.7"/>
<rect x="13.8" y="14" width="3.6" height="0.6"/></g>
</g>
<g transform="translate(515.5,245)">
<path d="M10.5,2.5 L25,2.5 L29.5,7 L29.5,29.5 L10.5,29.5 Z" fill="#fff" stroke="#000" stroke-width="1"/>
<path d="M10.5,2.5 L25,2.5" stroke="#808080" stroke-width="1"/>
<path d="M10.5,2.5 L10.5,29.5" stroke="#606060" stroke-width="0.8"/>
<path d="M25,2.5 L25,7 L29.5,7" fill="#fff" stroke="#000" stroke-width="1"/>
<path d="M29.5,7 L29.5,30 L10,30" fill="none" stroke="#000" stroke-width="1.3"/>
<rect x="11" y="17" width="15" height="6.5" fill="none" stroke="#C0C0C0" stroke-width="0.6" stroke-dasharray="0.8 0.8"/>
<rect x="2.6" y="14.6" width="20.9" height="7.4" fill="#000"/>
<rect x="12.4" y="11.8" width="6" height="3.2" fill="#000"/>
<rect x="5.6" y="21.4" width="2.2" height="2" fill="#000"/>
<g fill="#fff"><rect x="4" y="16.1" width="4.2" height="0.7"/><rect x="9" y="16.1" width="3.8" height="0.7"/><rect x="13.8" y="16.1" width="4" height="0.7"/><rect x="18.8" y="16.1" width="3.6" height="0.7"/>
<rect x="4" y="18.1" width="4.2" height="0.7"/><rect x="9" y="18.1" width="3.8" height="0.7"/><rect x="13.8" y="18.1" width="4" height="0.7"/><rect x="18.8" y="18.1" width="3.6" height="0.7"/>
<rect x="4" y="20.1" width="4.2" height="0.7"/><rect x="9" y="20.1" width="3.8" height="0.7"/><rect x="13.8" y="20.1" width="4" height="0.7"/><rect x="18.8" y="20.1" width="3.6" height="0.7"/>
<rect x="13.8" y="14" width="3.6" height="0.6"/></g>
</g>
<g transform="translate(290.5,320)">
<path d="M9.5,2.5 L24,2.5 L28.5,7 L28.5,29.5 L9.5,29.5 Z" fill="#fff" stroke="#000" stroke-width="1"/>
<path d="M9.5,2.5 L24,2.5" stroke="#909090" stroke-width="1"/>
<path d="M9.5,2.5 L9.5,29.5" stroke="#707070" stroke-width="0.8"/>
<path d="M24,2.5 L24,7 L28.5,7" fill="#fff" stroke="#000" stroke-width="1"/>
<path d="M28.5,7 L28.5,30 L9,30" fill="none" stroke="#000" stroke-width="1.3"/>
<ellipse cx="15.3" cy="16" rx="1.8" ry="7.2" fill="#E4E4E4" stroke="#B8B8B8" stroke-width="0.5"/>
<path d="M5.2,13.8 L7.2,13.6 L13.8,8.6 L14.2,23.4 L7.2,18.2 L5.2,18 Z" fill="#E8E890" stroke="#202000" stroke-width="0.7"/>
<path d="M5.4,17.8 L7.2,18.2 L14.2,23.4" fill="none" stroke="#000" stroke-width="1.3"/>
<path d="M13.9,8.8 L14.1,23.2" stroke="#000" stroke-width="1.5"/>
<circle cx="14" cy="9" r="1.1" fill="#000"/><circle cx="14.1" cy="23" r="1.1" fill="#000"/>
<circle cx="13.9" cy="16.6" r="1" fill="#000"/>
<g stroke="#9A9A9A" stroke-width="0.6"><path d="M17.2,13.5 L22.6,10.4"/><path d="M17.2,16.4 L21.6,16.4"/><path d="M17.2,19.6 L22.6,22.4"/></g>
</g>
<g transform="translate(365.5,320)">
<path d="M10.5,2.5 L25,2.5 L29.5,7 L29.5,29.5 L10.5,29.5 Z" fill="#fff" stroke="#000" stroke-width="1"/>
<path d="M10.5,2.5 L25,2.5" stroke="#808080" stroke-width="1"/>
<path d="M10.5,2.5 L10.5,29.5" stroke="#606060" stroke-width="0.8"/>
<path d="M25,2.5 L25,7 L29.5,7" fill="#fff" stroke="#000" stroke-width="1"/>
<path d="M29.5,7 L29.5,30 L10,30" fill="none" stroke="#000" stroke-width="1.3"/>
<rect x="11" y="17" width="15" height="6.5" fill="none" stroke="#C0C0C0" stroke-width="0.6" stroke-dasharray="0.8 0.8"/>
<rect x="2.6" y="14.6" width="20.9" height="7.4" fill="#000"/>
<rect x="12.4" y="11.8" width="6" height="3.2" fill="#000"/>
<rect x="5.6" y="21.4" width="2.2" height="2" fill="#000"/>
<g fill="#fff"><rect x="4" y="16.1" width="4.2" height="0.7"/><rect x="9" y="16.1" width="3.8" height="0.7"/><rect x="13.8" y="16.1" width="4" height="0.7"/><rect x="18.8" y="16.1" width="3.6" height="0.7"/>
<rect x="4" y="18.1" width="4.2" height="0.7"/><rect x="9" y="18.1" width="3.8" height="0.7"/><rect x="13.8" y="18.1" width="4" height="0.7"/><rect x="18.8" y="18.1" width="3.6" height="0.7"/>
<rect x="4" y="20.1" width="4.2" height="0.7"/><rect x="9" y="20.1" width="3.8" height="0.7"/><rect x="13.8" y="20.1" width="4" height="0.7"/><rect x="18.8" y="20.1" width="3.6" height="0.7"/>
<rect x="13.8" y="14" width="3.6" height="0.6"/></g>
</g>
<g transform="translate(440.5,320)">
<path d="M9.5,2.5 L24,2.5 L28.5,7 L28.5,29.5 L9.5,29.5 Z" fill="#fff" stroke="#000" stroke-width="1"/>
<path d="M9.5,2.5 L24,2.5" stroke="#909090" stroke-width="1"/>
<path d="M9.5,2.5 L9.5,29.5" stroke="#707070" stroke-width="0.8"/>
<path d="M24,2.5 L24,7 L28.5,7" fill="#fff" stroke="#000" stroke-width="1"/>
<path d="M28.5,7 L28.5,30 L9,30" fill="none" stroke="#000" stroke-width="1.3"/>
<ellipse cx="15.3" cy="16" rx="1.8" ry="7.2" fill="#E4E4E4" stroke="#B8B8B8" stroke-width="0.5"/>
<path d="M5.2,13.8 L7.2,13.6 L13.8,8.6 L14.2,23.4 L7.2,18.2 L5.2,18 Z" fill="#E8E890" stroke="#202000" stroke-width="0.7"/>
<path d="M5.4,17.8 L7.2,18.2 L14.2,23.4" fill="none" stroke="#000" stroke-width="1.3"/>
<path d="M13.9,8.8 L14.1,23.2" stroke="#000" stroke-width="1.5"/>
<circle cx="14" cy="9" r="1.1" fill="#000"/><circle cx="14.1" cy="23" r="1.1" fill="#000"/>
<circle cx="13.9" cy="16.6" r="1" fill="#000"/>
<g stroke="#9A9A9A" stroke-width="0.6"><path d="M17.2,13.5 L22.6,10.4"/><path d="M17.2,16.4 L21.6,16.4"/><path d="M17.2,19.6 L22.6,22.4"/></g>
</g>
<g transform="translate(515.5,320)">
<path d="M9.5,2.5 L24,2.5 L28.5,7 L28.5,29.5 L9.5,29.5 Z" fill="#fff" stroke="#000" stroke-width="1"/>
<path d="M9.5,2.5 L24,2.5" stroke="#909090" stroke-width="1"/>
<path d="M9.5,2.5 L9.5,29.5" stroke="#707070" stroke-width="0.8"/>
<path d="M24,2.5 L24,7 L28.5,7" fill="#fff" stroke="#000" stroke-width="1"/>
<path d="M28.5,7 L28.5,30 L9,30" fill="none" stroke="#000" stroke-width="1.3"/>
<ellipse cx="15.3" cy="16" rx="1.8" ry="7.2" fill="#E4E4E4" stroke="#B8B8B8" stroke-width="0.5"/>
<path d="M5.2,13.8 L7.2,13.6 L13.8,8.6 L14.2,23.4 L7.2,18.2 L5.2,18 Z" fill="#E8E890" stroke="#202000" stroke-width="0.7"/>
<path d="M5.4,17.8 L7.2,18.2 L14.2,23.4" fill="none" stroke="#000" stroke-width="1.3"/>
<path d="M13.9,8.8 L14.1,23.2" stroke="#000" stroke-width="1.5"/>
<circle cx="14" cy="9" r="1.1" fill="#000"/><circle cx="14.1" cy="23" r="1.1" fill="#000"/>
<circle cx="13.9" cy="16.6" r="1" fill="#000"/>
<g stroke="#9A9A9A" stroke-width="0.6"><path d="M17.2,13.5 L22.6,10.4"/><path d="M17.2,16.4 L21.6,16.4"/><path d="M17.2,19.6 L22.6,22.4"/></g>
</g>
<g transform="translate(290.5,395)">
<path d="M9.5,2.5 L24,2.5 L28.5,7 L28.5,29.5 L9.5,29.5 Z" fill="#fff" stroke="#000" stroke-width="1"/>
<path d="M9.5,2.5 L24,2.5" stroke="#909090" stroke-width="1"/>
<path d="M9.5,2.5 L9.5,29.5" stroke="#707070" stroke-width="0.8"/>
<path d="M24,2.5 L24,7 L28.5,7" fill="#fff" stroke="#000" stroke-width="1"/>
<path d="M28.5,7 L28.5,30 L9,30" fill="none" stroke="#000" stroke-width="1.3"/>
<ellipse cx="15.3" cy="16" rx="1.8" ry="7.2" fill="#E4E4E4" stroke="#B8B8B8" stroke-width="0.5"/>
<path d="M5.2,13.8 L7.2,13.6 L13.8,8.6 L14.2,23.4 L7.2,18.2 L5.2,18 Z" fill="#E8E890" stroke="#202000" stroke-width="0.7"/>
<path d="M5.4,17.8 L7.2,18.2 L14.2,23.4" fill="none" stroke="#000" stroke-width="1.3"/>
<path d="M13.9,8.8 L14.1,23.2" stroke="#000" stroke-width="1.5"/>
<circle cx="14" cy="9" r="1.1" fill="#000"/><circle cx="14.1" cy="23" r="1.1" fill="#000"/>
<circle cx="13.9" cy="16.6" r="1" fill="#000"/>
<g stroke="#9A9A9A" stroke-width="0.6"><path d="M17.2,13.5 L22.6,10.4"/><path d="M17.2,16.4 L21.6,16.4"/><path d="M17.2,19.6 L22.6,22.4"/></g>
</g>
<g transform="translate(365.5,395)">
<path d="M10.5,2.5 L25,2.5 L29.5,7 L29.5,29.5 L10.5,29.5 Z" fill="#fff" stroke="#000" stroke-width="1"/>
<path d="M10.5,2.5 L25,2.5" stroke="#808080" stroke-width="1"/>
<path d="M10.5,2.5 L10.5,29.5" stroke="#606060" stroke-width="0.8"/>
<path d="M25,2.5 L25,7 L29.5,7" fill="#fff" stroke="#000" stroke-width="1"/>
<path d="M29.5,7 L29.5,30 L10,30" fill="none" stroke="#000" stroke-width="1.3"/>
<rect x="11" y="17" width="15" height="6.5" fill="none" stroke="#C0C0C0" stroke-width="0.6" stroke-dasharray="0.8 0.8"/>
<rect x="2.6" y="14.6" width="20.9" height="7.4" fill="#000"/>
<rect x="12.4" y="11.8" width="6" height="3.2" fill="#000"/>
<rect x="5.6" y="21.4" width="2.2" height="2" fill="#000"/>
<g fill="#fff"><rect x="4" y="16.1" width="4.2" height="0.7"/><rect x="9" y="16.1" width="3.8" height="0.7"/><rect x="13.8" y="16.1" width="4" height="0.7"/><rect x="18.8" y="16.1" width="3.6" height="0.7"/>
<rect x="4" y="18.1" width="4.2" height="0.7"/><rect x="9" y="18.1" width="3.8" height="0.7"/><rect x="13.8" y="18.1" width="4" height="0.7"/><rect x="18.8" y="18.1" width="3.6" height="0.7"/>
<rect x="4" y="20.1" width="4.2" height="0.7"/><rect x="9" y="20.1" width="3.8" height="0.7"/><rect x="13.8" y="20.1" width="4" height="0.7"/><rect x="18.8" y="20.1" width="3.6" height="0.7"/>
<rect x="13.8" y="14" width="3.6" height="0.6"/></g>
</g>
<g transform="translate(440.5,395)">
<path d="M9.5,2.5 L24,2.5 L28.5,7 L28.5,29.5 L9.5,29.5 Z" fill="#fff" stroke="#000" stroke-width="1"/>
<path d="M9.5,2.5 L24,2.5" stroke="#909090" stroke-width="1"/>
<path d="M9.5,2.5 L9.5,29.5" stroke="#707070" stroke-width="0.8"/>
<path d="M24,2.5 L24,7 L28.5,7" fill="#fff" stroke="#000" stroke-width="1"/>
<path d="M28.5,7 L28.5,30 L9,30" fill="none" stroke="#000" stroke-width="1.3"/>
<ellipse cx="15.3" cy="16" rx="1.8" ry="7.2" fill="#E4E4E4" stroke="#B8B8B8" stroke-width="0.5"/>
<path d="M5.2,13.8 L7.2,13.6 L13.8,8.6 L14.2,23.4 L7.2,18.2 L5.2,18 Z" fill="#E8E890" stroke="#202000" stroke-width="0.7"/>
<path d="M5.4,17.8 L7.2,18.2 L14.2,23.4" fill="none" stroke="#000" stroke-width="1.3"/>
<path d="M13.9,8.8 L14.1,23.2" stroke="#000" stroke-width="1.5"/>
<circle cx="14" cy="9" r="1.1" fill="#000"/><circle cx="14.1" cy="23" r="1.1" fill="#000"/>
<circle cx="13.9" cy="16.6" r="1" fill="#000"/>
<g stroke="#9A9A9A" stroke-width="0.6"><path d="M17.2,13.5 L22.6,10.4"/><path d="M17.2,16.4 L21.6,16.4"/><path d="M17.2,19.6 L22.6,22.4"/></g>
</g>
<g transform="translate(515.5,395)">
<path d="M10.5,2.5 L25,2.5 L29.5,7 L29.5,29.5 L10.5,29.5 Z" fill="#fff" stroke="#000" stroke-width="1"/>
<path d="M10.5,2.5 L25,2.5" stroke="#808080" stroke-width="1"/>
<path d="M10.5,2.5 L10.5,29.5" stroke="#606060" stroke-width="0.8"/>
<path d="M25,2.5 L25,7 L29.5,7" fill="#fff" stroke="#000" stroke-width="1"/>
<path d="M29.5,7 L29.5,30 L10,30" fill="none" stroke="#000" stroke-width="1.3"/>
<rect x="11" y="17" width="15" height="6.5" fill="none" stroke="#C0C0C0" stroke-width="0.6" stroke-dasharray="0.8 0.8"/>
<rect x="2.6" y="14.6" width="20.9" height="7.4" fill="#000"/>
<rect x="12.4" y="11.8" width="6" height="3.2" fill="#000"/>
<rect x="5.6" y="21.4" width="2.2" height="2" fill="#000"/>
<g fill="#fff"><rect x="4" y="16.1" width="4.2" height="0.7"/><rect x="9" y="16.1" width="3.8" height="0.7"/><rect x="13.8" y="16.1" width="4" height="0.7"/><rect x="18.8" y="16.1" width="3.6" height="0.7"/>
<rect x="4" y="18.1" width="4.2" height="0.7"/><rect x="9" y="18.1" width="3.8" height="0.7"/><rect x="13.8" y="18.1" width="4" height="0.7"/><rect x="18.8" y="18.1" width="3.6" height="0.7"/>
<rect x="4" y="20.1" width="4.2" height="0.7"/><rect x="9" y="20.1" width="3.8" height="0.7"/><rect x="13.8" y="20.1" width="4" height="0.7"/><rect x="18.8" y="20.1" width="3.6" height="0.7"/>
<rect x="13.8" y="14" width="3.6" height="0.6"/></g>
</g>
<g transform="translate(290.5,470)">
<path d="M9.5,2.5 L24,2.5 L28.5,7 L28.5,29.5 L9.5,29.5 Z" fill="#fff" stroke="#000" stroke-width="1"/>
<path d="M9.5,2.5 L24,2.5" stroke="#909090" stroke-width="1"/>
<path d="M9.5,2.5 L9.5,29.5" stroke="#707070" stroke-width="0.8"/>
<path d="M24,2.5 L24,7 L28.5,7" fill="#fff" stroke="#000" stroke-width="1"/>
<path d="M28.5,7 L28.5,30 L9,30" fill="none" stroke="#000" stroke-width="1.3"/>
<ellipse cx="15.3" cy="16" rx="1.8" ry="7.2" fill="#E4E4E4" stroke="#B8B8B8" stroke-width="0.5"/>
<path d="M5.2,13.8 L7.2,13.6 L13.8,8.6 L14.2,23.4 L7.2,18.2 L5.2,18 Z" fill="#E8E890" stroke="#202000" stroke-width="0.7"/>
<path d="M5.4,17.8 L7.2,18.2 L14.2,23.4" fill="none" stroke="#000" stroke-width="1.3"/>
<path d="M13.9,8.8 L14.1,23.2" stroke="#000" stroke-width="1.5"/>
<circle cx="14" cy="9" r="1.1" fill="#000"/><circle cx="14.1" cy="23" r="1.1" fill="#000"/>
<circle cx="13.9" cy="16.6" r="1" fill="#000"/>
<g stroke="#9A9A9A" stroke-width="0.6"><path d="M17.2,13.5 L22.6,10.4"/><path d="M17.2,16.4 L21.6,16.4"/><path d="M17.2,19.6 L22.6,22.4"/></g>
</g>
<g transform="translate(365.5,470)">
<path d="M9.5,2.5 L24,2.5 L28.5,7 L28.5,29.5 L9.5,29.5 Z" fill="#fff" stroke="#000" stroke-width="1"/>
<path d="M9.5,2.5 L24,2.5" stroke="#909090" stroke-width="1"/>
<path d="M9.5,2.5 L9.5,29.5" stroke="#707070" stroke-width="0.8"/>
<path d="M24,2.5 L24,7 L28.5,7" fill="#fff" stroke="#000" stroke-width="1"/>
<path d="M28.5,7 L28.5,30 L9,30" fill="none" stroke="#000" stroke-width="1.3"/>
<ellipse cx="15.3" cy="16" rx="1.8" ry="7.2" fill="#E4E4E4" stroke="#B8B8B8" stroke-width="0.5"/>
<path d="M5.2,13.8 L7.2,13.6 L13.8,8.6 L14.2,23.4 L7.2,18.2 L5.2,18 Z" fill="#E8E890" stroke="#202000" stroke-width="0.7"/>
<path d="M5.4,17.8 L7.2,18.2 L14.2,23.4" fill="none" stroke="#000" stroke-width="1.3"/>
<path d="M13.9,8.8 L14.1,23.2" stroke="#000" stroke-width="1.5"/>
<circle cx="14" cy="9" r="1.1" fill="#000"/><circle cx="14.1" cy="23" r="1.1" fill="#000"/>
<circle cx="13.9" cy="16.6" r="1" fill="#000"/>
<g stroke="#9A9A9A" stroke-width="0.6"><path d="M17.2,13.5 L22.6,10.4"/><path d="M17.2,16.4 L21.6,16.4"/><path d="M17.2,19.6 L22.6,22.4"/></g>
</g>
<g transform="translate(440.5,470)">
<path d="M9.5,2.5 L24,2.5 L28.5,7 L28.5,29.5 L9.5,29.5 Z" fill="#fff" stroke="#000" stroke-width="1"/>
<path d="M9.5,2.5 L24,2.5" stroke="#909090" stroke-width="1"/>
<path d="M9.5,2.5 L9.5,29.5" stroke="#707070" stroke-width="0.8"/>
<path d="M24,2.5 L24,7 L28.5,7" fill="#fff" stroke="#000" stroke-width="1"/>
<path d="M28.5,7 L28.5,30 L9,30" fill="none" stroke="#000" stroke-width="1.3"/>
<ellipse cx="15.3" cy="16" rx="1.8" ry="7.2" fill="#E4E4E4" stroke="#B8B8B8" stroke-width="0.5"/>
<path d="M5.2,13.8 L7.2,13.6 L13.8,8.6 L14.2,23.4 L7.2,18.2 L5.2,18 Z" fill="#E8E890" stroke="#202000" stroke-width="0.7"/>
<path d="M5.4,17.8 L7.2,18.2 L14.2,23.4" fill="none" stroke="#000" stroke-width="1.3"/>
<path d="M13.9,8.8 L14.1,23.2" stroke="#000" stroke-width="1.5"/>
<circle cx="14" cy="9" r="1.1" fill="#000"/><circle cx="14.1" cy="23" r="1.1" fill="#000"/>
<circle cx="13.9" cy="16.6" r="1" fill="#000"/>
<g stroke="#9A9A9A" stroke-width="0.6"><path d="M17.2,13.5 L22.6,10.4"/><path d="M17.2,16.4 L21.6,16.4"/><path d="M17.2,19.6 L22.6,22.4"/></g>
</g>
<g transform="translate(515.5,470)">
<path d="M9.5,2.5 L24,2.5 L28.5,7 L28.5,29.5 L9.5,29.5 Z" fill="#fff" stroke="#000" stroke-width="1"/>
<path d="M9.5,2.5 L24,2.5" stroke="#909090" stroke-width="1"/>
<path d="M9.5,2.5 L9.5,29.5" stroke="#707070" stroke-width="0.8"/>
<path d="M24,2.5 L24,7 L28.5,7" fill="#fff" stroke="#000" stroke-width="1"/>
<path d="M28.5,7 L28.5,30 L9,30" fill="none" stroke="#000" stroke-width="1.3"/>
<ellipse cx="15.3" cy="16" rx="1.8" ry="7.2" fill="#E4E4E4" stroke="#B8B8B8" stroke-width="0.5"/>
<path d="M5.2,13.8 L7.2,13.6 L13.8,8.6 L14.2,23.4 L7.2,18.2 L5.2,18 Z" fill="#E8E890" stroke="#202000" stroke-width="0.7"/>
<path d="M5.4,17.8 L7.2,18.2 L14.2,23.4" fill="none" stroke="#000" stroke-width="1.3"/>
<path d="M13.9,8.8 L14.1,23.2" stroke="#000" stroke-width="1.5"/>
<circle cx="14" cy="9" r="1.1" fill="#000"/><circle cx="14.1" cy="23" r="1.1" fill="#000"/>
<circle cx="13.9" cy="16.6" r="1" fill="#000"/>
<g stroke="#9A9A9A" stroke-width="0.6"><path d="M17.2,13.5 L22.6,10.4"/><path d="M17.2,16.4 L21.6,16.4"/><path d="M17.2,19.6 L22.6,22.4"/></g>
</g>
</g></svg>
<div class="a" style="left:596px;top:168px;width:16px;height:320px;background-color:#F4F3F0;background-image:repeating-conic-gradient(#D4D0C8 0 25%,#FFFFFF 0 50%);background-size:2px 2px;"></div>
<div class="a raised" style="left:596px;top:168px;width:16px;height:16px;"></div>
<div class="a raised" style="left:596px;top:184px;width:16px;height:113px;"></div>
<div class="a raised" style="left:596px;top:472px;width:16px;height:16px;"></div>
<svg style="left:0;top:0" width="800" height="600" viewBox="0 0 800 600">
<path d="M600,178 L608,178 L604,174 Z" fill="#000"/>
<path d="M600.5,477 L607.5,477 L604,480.5 Z" fill="#000"/>
</svg>
<div class="a panel" style="left:70px;top:492px;width:310px;height:17px;"></div>
<div class="a panel" style="left:382px;top:492px;width:76px;height:17px;"></div>
<div class="a panel" style="left:461px;top:492px;width:153px;height:17px;"></div>
<div class="t" style="left:72px;top:495px;">Type: MIDI Sequence Size: 90.2 KB</div>
<div class="t" style="left:384px;top:495px;">90.2 KB</div>
<div class="t" style="left:482.5px;top:495px;">My Computer</div>
<svg style="left:0;top:0" width="800" height="600" viewBox="0 0 800 600"><defs><linearGradient id="beigeS" x1="0" y1="0" x2="1" y2="1"><stop offset="0" stop-color="#FFFFFF"/><stop offset="1" stop-color="#B8B0A0"/></linearGradient></defs>
<rect x="465" y="494.5" width="12" height="9" fill="url(#beigeS)" stroke="#303030" stroke-width="0.6"/>
<rect x="466.8" y="496" width="8.4" height="6" fill="#30A8E8"/>
<path d="M463.5,504 L478,504 L478.5,508 L463,508 Z" fill="#D8D0C0" stroke="#303030" stroke-width="0.6"/>
<g stroke="#fff" stroke-width="0.9"><path d="M603,508 L612,499"/><path d="M606,508 L612,502"/><path d="M609,508 L612,505"/></g>
<g stroke="#808080" stroke-width="0.9"><path d="M604,508 L612,500"/><path d="M607,508 L612,503"/><path d="M610,508 L612,506"/></g>
</svg>
<div class="a face" style="left:0px;top:572px;width:800px;height:28px;box-shadow:inset 0 1px #F4F4F4,inset 0 2px #FFFFFF;"></div>
<div class="a raised" style="left:2px;top:576px;width:55px;height:22px;"></div>
<div class="t b" style="left:23.5px;top:579.8px;letter-spacing:0.8px;">Start</div>
<div class="a" style="left:155px;top:576px;width:160px;height:22px;background:#ECEAE6;box-shadow:inset 1px 1px #404040,inset -1px -1px #FFFFFF,inset 2px 2px #808080,inset -2px -2px #D4D0C8;"></div>
<div class="t b" style="left:176.25px;top:582px;">Media</div>
<div class="a panel" style="left:704px;top:576px;width:93px;height:21px;"></div>
<div class="t" style="left:740.8px;top:582.45px;letter-spacing:0.05px;">2:23 AM</div>
<svg style="left:0;top:0" width="800" height="600" viewBox="0 0 800 600"><defs><radialGradient id="iee2" cx="0.65" cy="0.3" r="0.8"><stop offset="0" stop-color="#60E0FF"/><stop offset="0.4" stop-color="#2E80F0"/><stop offset="1" stop-color="#1030B0"/></radialGradient></defs>
<!-- start flag -->
<path d="M12.2,582 Q16,579.4 19.5,580.4 L21.8,580.2 L21.8,593.8 L19,592.6 Q15.5,591.8 12.2,593.6 L8.2,593.6 L8.2,582.5 Z" fill="#000"/>
<path d="M13.7,582.4 Q15,581.6 16.2,581.7 L16.2,585 L13.7,585.3 Z" fill="#D02010"/>
<path d="M17.8,581.6 L20,582 L20,586 L17.8,585.7 Z" fill="#20C020"/>
<path d="M13.5,586.8 L16.2,586.5 L16.2,590.4 L13.5,590.8 Z" fill="#1020D0"/>
<path d="M17.8,587.4 L20,587.8 L20,591.4 L17.8,591 Z" fill="#E8E070"/>
<g fill="#000"><rect x="5.9" y="580.6" width="1.1" height="1.4"/><rect x="5.9" y="583.2" width="1.1" height="1.4"/><rect x="5.9" y="586" width="1.1" height="1.4"/><rect x="5.9" y="589" width="1.1" height="1.4"/><rect x="5.9" y="592" width="1.1" height="1.4"/>
<rect x="8.3" y="582.6" width="3.8" height="1"/><rect x="8.3" y="591.8" width="3.8" height="1"/></g>
<rect x="5.4" y="585.2" width="6.8" height="1.5" fill="#F04848"/>
<rect x="5.4" y="588.7" width="6.8" height="1.5" fill="#3040F0"/>
<!-- separators + grips -->
<rect x="60" y="576" width="1" height="21" fill="#808080"/><rect x="61" y="576" width="1" height="21" fill="#fff"/>
<rect x="145" y="576" width="1" height="21" fill="#808080"/><rect x="146" y="576" width="1" height="21" fill="#fff"/>
<!-- show desktop -->
<rect x="74" y="580.7" width="15.8" height="14" fill="#D8D4B8"/>
<path d="M74,580.7 L89.8,580.7 L89.8,594.7 L74,594.7 Z" fill="none" stroke="#2A90B8" stroke-width="1.4"/>
<path d="M89.8,581 L89.8,594.7 L74,594.7" fill="none" stroke="#0A2040" stroke-width="1.2"/>
<path d="M75.5,582 L82,582 L75.5,588 Z" fill="#F8F8F0" opacity="0.7"/>
<path d="M88.5,593.5 L82,593.5 L88.5,587 Z" fill="#A8A490" opacity="0.7"/>
<rect x="78.3" y="584.6" width="5" height="6.8" fill="#FFFFFF"/>
<path d="M78.3,584.6 L78.3,591.4 L83.3,591.4" fill="none" stroke="#000" stroke-width="1"/>
<path d="M80,587.6 L87.4,579.6" stroke="#D8A820" stroke-width="1.8"/>
<path d="M86.6,580.4 L87.8,579.2" stroke="#C05030" stroke-width="1.6"/>
<path d="M80,587.6 L80.8,586.8" stroke="#202020" stroke-width="1.2"/>
<!-- IE small -->
<circle cx="105.5" cy="587.2" r="6.4" fill="url(#iee2)"/>
<ellipse cx="106" cy="584.9" rx="2.6" ry="1.5" fill="#C8E8FF"/>
<rect x="104" y="587.6" width="7.5" height="1.5" fill="#C8E8FF"/>
<path d="M101,581.5 Q97,587 99.2,593 Q101.5,595.2 104,594" fill="none" stroke="#2A40C0" stroke-width="1.3"/>
<path d="M108.5,580.2 Q112,580.2 111.8,583" fill="none" stroke="#2A40C0" stroke-width="1.1"/>
<!-- outlook express -->
<rect x="120.6" y="582.4" width="15" height="8.8" fill="#FFF8E0" stroke="#000" stroke-width="0.9"/>
<rect x="132" y="584" width="2" height="2" fill="#C03020"/>
<path d="M129,580 Q125,580 124.5,583.5" fill="none" stroke="#1E50E0" stroke-width="1.8"/>
<path d="M122.2,582.4 L126.8,582.4 L124.5,586 Z" fill="#1E50E0"/>
<path d="M128.5,593.5 Q133,593.5 133.5,589.5" fill="none" stroke="#1E50E0" stroke-width="1.8"/>
<path d="M131.2,590 L135.8,590 L133.5,586.6 Z" fill="#1E50E0"/>
<!-- task folder -->
<path d="M160,582 L162,580.5 L166,580.5 L167,582 L172.5,582 L172.5,592.5 L160,592.5 Z" fill="#F0E070" stroke="#202000" stroke-width="0.7"/>
<path d="M159.5,586 L170.5,586 L175,593 L162,593 Z" fill="#F8F0A0" stroke="#202000" stroke-width="0.7"/>
<!-- tray speaker -->
<path d="M709,584.5 L711,584.3 L716,579.5 L716.5,593 L711,588.5 L709,588.3 Z" fill="#E8E890" stroke="#000" stroke-width="0.8"/>
<path d="M709.2,588.2 L711,588.5 L716.5,593" fill="none" stroke="#000" stroke-width="1.2"/>
<path d="M716,579.5 L716.5,593" stroke="#000" stroke-width="1.5"/>
<circle cx="716" cy="580" r="1" fill="#000"/><circle cx="716.4" cy="592.6" r="1" fill="#000"/>
<ellipse cx="717.5" cy="586.3" rx="1.3" ry="5.5" fill="#E8E8E8" stroke="#B0B0B0" stroke-width="0.4"/>
<g stroke="#A0A0A0" stroke-width="0.6"><path d="M719.5,584 L723,581.5"/><path d="M719.5,586.5 L723.5,586.5"/><path d="M719.5,589 L723,591.5"/></g>
</svg>
<div class="a grip" style="left:63px;top:578px;height:17px;"></div>
<div class="a grip" style="left:147px;top:578px;height:17px;"></div>
</div></body></html>
